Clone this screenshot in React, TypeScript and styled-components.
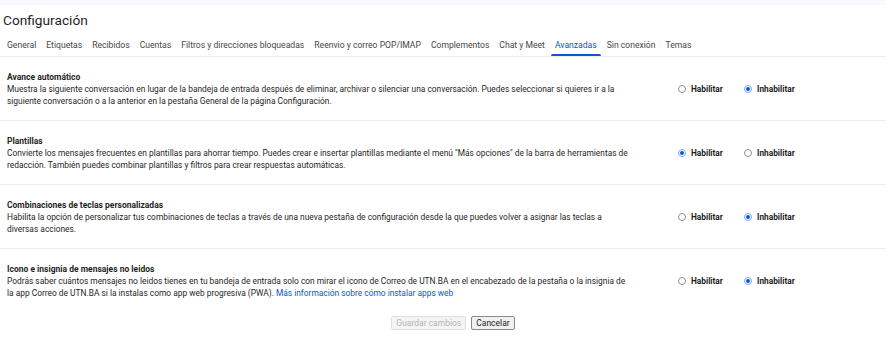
import React, { useState } from "react";
import styled, { createGlobalStyle } from "styled-components";

const GlobalStyle = createGlobalStyle`
  body {
    margin: 0;
    background: #ffffff;
    font-family: Roboto, "Liberation Sans", Arial, sans-serif;
    color: #1f1f1f;
  }
`;

const Page = styled.div`
  width: 886px;
  height: 352px;
  overflow: hidden;
  background: #ffffff;
`;

const TopStrip = styled.div`
  height: 5px;
  background: #f8fafd;
`;

const Title = styled.h1`
  margin: 0;
  padding: 6px 0 0 3px;
  height: 26px;
  box-sizing: border-box;
  font-size: 13.7px;
  font-weight: 400;
  line-height: 18px;
  color: #1f1f1f;
`;

const Tabs = styled.nav`
  display: flex;
  gap: 10px;
  padding-left: 7px;
  height: 26px;
  border-bottom: 1px solid #ececec;
  box-sizing: border-box;
`;

const Tab = styled.a<{ $active?: boolean }>`
  position: relative;
  display: flex;
  align-items: center;
  padding-top: 2px;
  font-size: 8.6px;
  color: ${(p) => (p.$active ? "#0b57d0" : "#444746")};
  text-decoration: none;
  white-space: nowrap;
  cursor: pointer;
  &::after {
    content: "";
    display: ${(p) => (p.$active ? "block" : "none")};
    position: absolute;
    left: -4px;
    right: -4px;
    bottom: 0;
    height: 2px;
    border-radius: 2px 2px 0 0;
    background: #0b57d0;
  }
`;

const Section = styled.section`
  display: grid;
  grid-template-columns: 671px auto;
  padding: 14px 0 13px 7px;
  border-bottom: 1px solid #ececec;
  &:last-of-type {
    border-bottom: none;
  }
`;

const SectionTitle = styled.div`
  font-size: 8.5px;
  font-weight: 700;
  line-height: 12px;
  color: #1f1f1f;
`;

const Description = styled.p`
  margin: 0;
  font-size: 8.4px;
  line-height: 12px;
  color: #1f1f1f;
`;

const Line = styled.span`
  display: block;
  white-space: nowrap;
`;

const Link = styled.a`
  color: #0b57d0;
  text-decoration: none;
`;

const Options = styled.div`
  display: flex;
  padding-top: 12px;
  height: 12px;
`;

const Option = styled.label`
  display: flex;
  align-items: center;
  gap: 5px;
  width: 66px;
  font-size: 8.3px;
  font-weight: 700;
  color: #1f1f1f;
  cursor: pointer;
`;

const Radio = styled.span<{ $checked: boolean }>`
  display: flex;
  align-items: center;
  justify-content: center;
  width: 8px;
  height: 8px;
  box-sizing: border-box;
  border-radius: 50%;
  border: 1px solid ${(p) => (p.$checked ? "#7fa8ee" : "#8f8f8f")};
  background: #ffffff;
  flex-shrink: 0;
  &::after {
    content: "";
    display: ${(p) => (p.$checked ? "block" : "none")};
    width: 4px;
    height: 4px;
    border-radius: 50%;
    background: #0b57d0;
  }
`;

const Actions = styled.div`
  display: flex;
  justify-content: center;
  gap: 5px;
  padding: 4px 0 0 20px;
`;

const Button = styled.button<{ $disabled?: boolean }>`
  font-family: Roboto, "Liberation Sans", Arial, sans-serif;
  font-size: 8.5px;
  height: 14px;
  padding: 0 4px;
  border-radius: 2px;
  border: 1px solid ${(p) => (p.$disabled ? "#e0e0e0" : "#8a8a8a")};
  background: ${(p) => (p.$disabled ? "#f4f4f4" : "#f1f1f1")};
  color: ${(p) => (p.$disabled ? "#b5b5b5" : "#1f1f1f")};
  cursor: ${(p) => (p.$disabled ? "default" : "pointer")};
`;

const tabs = [
  "General",
  "Etiquetas",
  "Recibidos",
  "Cuentas",
  "Filtros y direcciones bloqueadas",
  "Reenvio y correo POP/IMAP",
  "Complementos",
  "Chat y Meet",
  "Avanzadas",
  "Sin conexión",
  "Temas",
];

interface Setting {
  id: string;
  title: string;
  lines: React.ReactNode[];
  enabled: boolean;
}

const settings: Setting[] = [
  {
    id: "autoadvance",
    title: "Avance automático",
    lines: [
      "Muestra la siguiente conversación en lugar de la bandeja de entrada después de eliminar, archivar o silenciar una conversación. Puedes seleccionar si quieres ir a la",
      "siguiente conversación o a la anterior en la pestaña General de la página Configuración.",
    ],
    enabled: false,
  },
  {
    id: "templates",
    title: "Plantillas",
    lines: [
      'Convierte los mensajes frecuentes en plantillas para ahorrar tiempo. Puedes crear e insertar plantillas mediante el menú "Más opciones" de la barra de herramientas de',
      "redacción. También puedes combinar plantillas y filtros para crear respuestas automáticas.",
    ],
    enabled: true,
  },
  {
    id: "shortcuts",
    title: "Combinaciones de teclas personalizadas",
    lines: [
      "Habilita la opción de personalizar tus combinaciones de teclas a través de una nueva pestaña de configuración desde la que puedes volver a asignar las teclas a",
      "diversas acciones.",
    ],
    enabled: false,
  },
  {
    id: "unread",
    title: "Icono e insignia de mensajes no leidos",
    lines: [
      "Podrás saber cuántos mensajes no leidos tienes en tu bandeja de entrada solo con mirar el icono de Correo de UTN.BA en el encabezado de la pestaña o la insignia de",
      <>
        la app Correo de UTN.BA si la instalas como app web progresiva (PWA).{" "}
        <Link href="#">Más información sobre cómo instalar apps web</Link>
      </>,
    ],
    enabled: false,
  },
];

function SettingRow({ setting }: { setting: Setting }) {
  const [enabled, setEnabled] = useState(setting.enabled);
  return (
    <Section>
      <div>
        <SectionTitle>{setting.title}</SectionTitle>
        <Description>
          {setting.lines.map((l, i) => (
            <Line key={i}>{l}</Line>
          ))}
        </Description>
      </div>
      <Options>
        <Option onClick={() => setEnabled(true)}>
          <Radio $checked={enabled} />
          Habilitar
        </Option>
        <Option onClick={() => setEnabled(false)}>
          <Radio $checked={!enabled} />
          Inhabilitar
        </Option>
      </Options>
    </Section>
  );
}

export default function App() {
  return (
    <Page>
      <GlobalStyle />
      <TopStrip />
      <Title>Configuración</Title>
      <Tabs>
        {tabs.map((t) => (
          <Tab key={t} $active={t === "Avanzadas"}>
            {t}
          </Tab>
        ))}
      </Tabs>
      <main>
        {settings.map((s) => (
          <SettingRow key={s.id} setting={s} />
        ))}
      </main>
      <Actions>
        <Button $disabled>Guardar cambios</Button>
        <Button>Cancelar</Button>
      </Actions>
    </Page>
  );
}
